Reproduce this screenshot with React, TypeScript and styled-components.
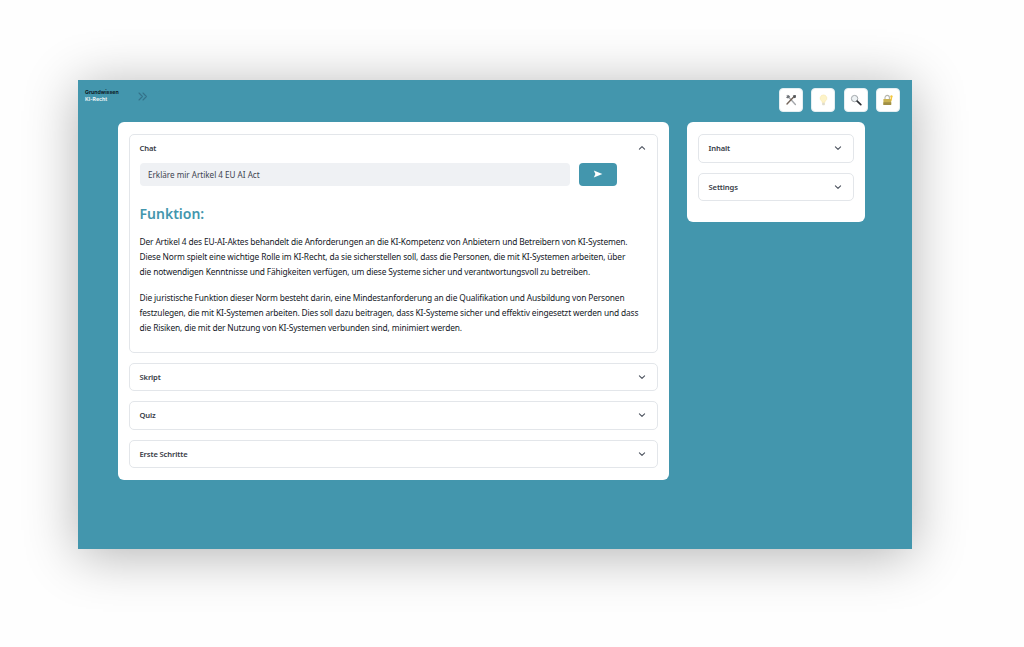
import React from 'react';
import styled, { createGlobalStyle } from 'styled-components';

const GlobalStyle = createGlobalStyle`
  html, body {
    margin: 0;
    padding: 0;
    background: #fefefe;
    overflow: hidden;
  }
  body {
    font-family: "Noto Sans", "Liberation Sans", sans-serif;
    color: #1f2530;
  }
`;

const Page = styled.div`
  width: 1024px;
  height: 647px;
  padding: 80px 112px 98px 78px;
  box-sizing: border-box;
`;

const Frame = styled.div`
  height: 469px;
  background: #4396ad;
  box-shadow: 0 6px 50px rgba(0, 0, 0, 0.3);
  display: flex;
  flex-direction: column;
  padding: 8px 12px 0 7px;
  box-sizing: border-box;
`;

const TopBar = styled.header`
  height: 34px;
  display: flex;
  align-items: flex-start;
  justify-content: space-between;
`;

const BrandGroup = styled.div`
  display: flex;
  align-items: center;
`;

const Brand = styled.div`
  width: 53px;
  padding-top: 1px;
  font-family: "Inter", "Liberation Sans", sans-serif;
  font-size: 5.2px;
  font-weight: 700;
  line-height: 7px;
`;

const BrandTitle = styled.div`
  color: #0d1c26;
`;

const BrandSub = styled.div`
  color: #e8f3f6;
`;

const Collapse = styled.span`
  display: flex;
  margin-top: 1px;
`;

const Tools = styled.div`
  display: flex;
  gap: 8.3px;
`;

const ToolButton = styled.button`
  width: 24px;
  height: 24px;
  padding: 0;
  border: 1px solid #e4eef1;
  border-radius: 4px;
  background: #fff;
  display: flex;
  align-items: center;
  justify-content: center;
`;

const Columns = styled.main`
  display: flex;
  align-items: flex-start;
  gap: 18px;
  padding-left: 33px;
`;

const Card = styled.section<{ $width: number }>`
  width: ${(p) => p.$width}px;
  box-sizing: border-box;
  background: #fff;
  border-radius: 6px;
  padding: 12px 11px;
  display: flex;
  flex-direction: column;
  gap: 10px;
`;

const SideCard = styled(Card)`
  padding-bottom: 21px;
`;

const Panel = styled.div`
  border: 1px solid #e3e6ea;
  border-radius: 5px;
  background: #fff;
`;

const PanelHead = styled.div`
  height: 26.6px;
  padding: 0 11px 0 9.5px;
  display: flex;
  align-items: center;
  justify-content: space-between;
`;

const PanelTitle = styled.span`
  font-size: 7.6px;
  font-weight: 600;
  letter-spacing: -0.12px;
  color: #363b46;
`;

const PanelBody = styled.div`
  padding: 1px 9.5px 16.5px;
`;

const Ask = styled.div`
  display: flex;
  align-items: stretch;
  gap: 9px;
  padding-right: 31px;
`;

const AskInput = styled.div`
  flex: 1;
  height: 23.5px;
  padding-left: 8.5px;
  box-sizing: border-box;
  border-radius: 4px;
  background: #eff1f4;
  display: flex;
  align-items: center;
  font-size: 8.1px;
  color: #3d4350;
`;

const SendButton = styled.button`
  width: 38px;
  height: 23.5px;
  padding: 0;
  border: 0;
  border-radius: 4px;
  background: #4396ad;
  display: flex;
  align-items: center;
  justify-content: center;
`;

const Heading = styled.h2`
  margin: 17px 0 9px;
  font-size: 14px;
  line-height: 22px;
  font-weight: 600;
  color: #4396ad;
`;

const Paragraph = styled.p`
  margin: 0 0 11px;
  font-size: 8.4px;
  line-height: 15px;
  letter-spacing: -0.145px;
  white-space: nowrap;
  color: #14181f;

  &:last-child {
    margin-bottom: 0;
  }
`;

function Chevron({ up = false }: { up?: boolean }) {
  return (
    <svg width="8" height="8" viewBox="0 0 8 8" fill="none">
      <path
        d={up ? 'M1.4 5.2 4 2.7l2.6 2.5' : 'M1.4 2.9 4 5.4l2.6-2.5'}
        stroke="#4a505c"
        strokeWidth="1.1"
        strokeLinecap="round"
        strokeLinejoin="round"
      />
    </svg>
  );
}

function ToolsIcon() {
  return (
    <svg width="12" height="12" viewBox="0 0 12 12" fill="none">
      <path d="M2.2 1.6 10.4 10.4" stroke="#a5a8ac" strokeWidth="1.4" strokeLinecap="round" />
      <path d="M1 3.4 3.4 1 5.2 2.4 3 4.6Z" fill="#6e7277" />
      <path d="M9.6 1.9 2 10" stroke="#74655a" strokeWidth="1.4" strokeLinecap="round" />
      <path d="M7.8 1.4 10.8 1 11 3.6 9 4.2Z" fill="#55585c" />
    </svg>
  );
}

function BulbIcon() {
  return (
    <svg width="9" height="13" viewBox="0 0 10 14" fill="none">
      <path
        d="M5 .8a3.7 3.7 0 0 1 2.2 6.7c-.5.4-.7 1-.7 1.7h-3c0-.7-.2-1.3-.7-1.7A3.7 3.7 0 0 1 5 .8Z"
        fill="#fdf3c8"
        stroke="#f5e5a6"
        strokeWidth=".6"
      />
      <rect x="3.5" y="9.6" width="3" height="2.6" rx=".7" fill="#e0dccb" />
    </svg>
  );
}

function SearchIcon() {
  return (
    <svg width="12" height="12" viewBox="0 0 12 12" fill="none">
      <circle cx="4.6" cy="4.6" r="3.2" fill="#edf2f4" stroke="#a2a7ab" strokeWidth="1" />
      <path d="M7.2 7.2 10.8 10.6" stroke="#2c2e33" strokeWidth="1.7" strokeLinecap="round" />
    </svg>
  );
}

function LockIcon() {
  return (
    <svg width="12" height="12" viewBox="0 0 12 12" fill="none">
      <path d="M3 5.5V3.6a2.2 2.2 0 0 1 4.4 0v1.9" stroke="#b5b5ac" strokeWidth="1.1" />
      <rect x="1.4" y="5" width="7.8" height="6" rx=".6" fill="#c9b252" />
      <rect x="1.4" y="8.2" width="7.8" height="2.8" rx=".4" fill="#a08f45" />
      <path d="M9.5 1.2a1.2 1.2 0 0 1 .8 2.1L9.6 7 8.4 6l.2-2.7a1.2 1.2 0 0 1 .9-2.1Z" fill="#f2c63f" />
    </svg>
  );
}

const sideSections = ['Inhalt', 'Settings'];
const mainSections = ['Skript', 'Quiz', 'Erste Schritte'];

function ClosedPanel({ title }: { title: string }) {
  return (
    <Panel>
      <PanelHead>
        <PanelTitle>{title}</PanelTitle>
        <Chevron />
      </PanelHead>
    </Panel>
  );
}

export default function App() {
  return (
    <Page>
      <GlobalStyle />
      <Frame>
        <TopBar>
          <BrandGroup>
            <Brand>
              <BrandTitle>Grundwissen</BrandTitle>
              <BrandSub>KI-Recht</BrandSub>
            </Brand>
            <Collapse>
              <svg width="10" height="9" viewBox="0 0 10 9" fill="none">
                <path
                  d="M1 1l3.4 3.5L1 8M5 1l3.4 3.5L5 8"
                  stroke="#34728a"
                  strokeWidth="1.1"
                  strokeLinecap="round"
                  strokeLinejoin="round"
                />
              </svg>
            </Collapse>
          </BrandGroup>
          <Tools>
            <ToolButton><ToolsIcon /></ToolButton>
            <ToolButton><BulbIcon /></ToolButton>
            <ToolButton><SearchIcon /></ToolButton>
            <ToolButton><LockIcon /></ToolButton>
          </Tools>
        </TopBar>
        <Columns>
          <Card $width={551}>
            <Panel>
              <PanelHead>
                <PanelTitle>Chat</PanelTitle>
                <Chevron up />
              </PanelHead>
              <PanelBody>
                <Ask>
                  <AskInput>Erkläre mir Artikel 4 EU AI Act</AskInput>
                  <SendButton>
                    <svg width="10" height="8" viewBox="0 0 10 8">
                      <path d="M.8.6 9.4 4 .8 7.4 2.4 4Z" fill="#fff" />
                    </svg>
                  </SendButton>
                </Ask>
                <Heading>Funktion:</Heading>
                <Paragraph>
                  Der Artikel 4 des EU-AI-Aktes behandelt die Anforderungen an die KI-Kompetenz von Anbietern und Betreibern von KI-Systemen.
                  <br />
                  Diese Norm spielt eine wichtige Rolle im KI-Recht, da sie sicherstellen soll, dass die Personen, die mit KI-Systemen arbeiten, über
                  <br />
                  die notwendigen Kenntnisse und Fähigkeiten verfügen, um diese Systeme sicher und verantwortungsvoll zu betreiben.
                </Paragraph>
                <Paragraph>
                  Die juristische Funktion dieser Norm besteht darin, eine Mindestanforderung an die Qualifikation und Ausbildung von Personen
                  <br />
                  festzulegen, die mit KI-Systemen arbeiten. Dies soll dazu beitragen, dass KI-Systeme sicher und effektiv eingesetzt werden und dass
                  <br />
                  die Risiken, die mit der Nutzung von KI-Systemen verbunden sind, minimiert werden.
                </Paragraph>
              </PanelBody>
            </Panel>
            {mainSections.map((title) => (
              <ClosedPanel key={title} title={title} />
            ))}
          </Card>
          <SideCard $width={178}>
            {sideSections.map((title) => (
              <ClosedPanel key={title} title={title} />
            ))}
          </SideCard>
        </Columns>
      </Frame>
    </Page>
  );
}
